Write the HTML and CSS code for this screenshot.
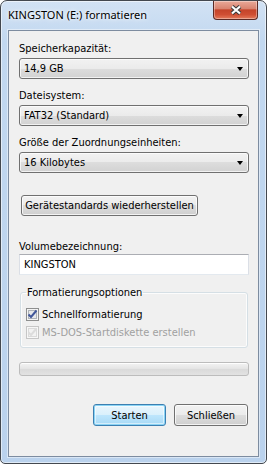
FILE: index.html
```html
<!DOCTYPE html>
<html lang="de">
<head>
    <meta charset="UTF-8">
    <meta name="viewport" content="width=device-width, initial-scale=1.0">
    <title>KINGSTON (E:) formatieren</title>
    <link rel="stylesheet" href="styles.css">
</head>
<body>
    <div class="window">
        <div class="titlebar">
            <span class="title">KINGSTON (E:) formatieren</span>
            <div class="close">
                <svg width="12" height="10" viewBox="0 0 12 10">
                    <path d="M2 1.5 L10 8.5 M10 1.5 L2 8.5" stroke="#3b3b3b" stroke-width="4.2" fill="none"/>
                    <path d="M2 1.5 L10 8.5 M10 1.5 L2 8.5" stroke="#fff" stroke-width="2.2" fill="none"/>
                </svg>
            </div>
        </div>

        <div class="client">
            <div class="caption first">Speicherkapazität:</div>
            <div class="combo"><span>14,9 GB</span><span class="arrow"></span></div>

            <div class="caption">Dateisystem:</div>
            <div class="combo"><span>FAT32 (Standard)</span><span class="arrow"></span></div>

            <div class="caption">Größe der Zuordnungseinheiten:</div>
            <div class="combo"><span>16 Kilobytes</span><span class="arrow"></span></div>

            <div class="btn reset">Gerätestandards wiederherstellen</div>

            <div class="caption volume">Volumebezeichnung:</div>
            <div class="textbox">KINGSTON</div>

            <fieldset class="group">
                <legend>Formatierungsoptionen</legend>
                <div class="check first">
                    <span class="box">
                        <svg width="11" height="11" viewBox="0 0 11 11">
                            <rect x="1.5" y="1.5" width="8" height="8" class="inner"/>
                            <path d="M1.5 5.5 L4 8 L9.5 1.5" fill="none" stroke="#41579a" stroke-width="2"/>
                        </svg>
                    </span>
                    <span>Schnellformatierung</span>
                </div>
                <div class="check disabled">
                    <span class="box">
                        <svg width="11" height="11" viewBox="0 0 11 11">
                            <rect x="1.5" y="1.5" width="8" height="8" class="inner"/>
                            <path d="M1.5 5.5 L4 8 L9.5 1.5" fill="none" stroke="#dcdcdc" stroke-width="2"/>
                        </svg>
                    </span>
                    <span>MS-DOS-Startdiskette erstellen</span>
                </div>
            </fieldset>

            <div class="progress"></div>

            <div class="actions">
                <div class="btn default">Starten</div>
                <div class="btn">Schließen</div>
            </div>
        </div>
    </div>
</body>
</html>
```

FILE: styles.css
```css
/* Fenster */
body {
    margin: 0;
    font-family: "DejaVu Sans Condensed", "Liberation Sans", sans-serif;
    font-size: 11px;
    color: #000;
}

.window {
    width: 267px;
    height: 464px;
    box-sizing: border-box;
    display: flex;
    flex-direction: column;
    padding: 0 7px 6px 7px;
    border: 1px solid #43484f;
    border-radius: 7px 7px 5px 5px;
    background: linear-gradient(180deg, #d2e2f4 0%, #c2d8f0 40px, #bad2ed 100%);
    box-shadow: inset 0 0 0 1px rgba(255, 255, 255, 0.55);
}

.titlebar {
    height: 29px;
    display: flex;
    align-items: flex-start;
}

.title {
    padding-top: 6px;
    font-family: "Noto Sans", sans-serif;
    font-size: 11px;
    line-height: 15px;
    text-shadow: 0 0 6px rgba(255, 255, 255, 0.95), 0 0 3px rgba(255, 255, 255, 0.9);
}

.close {
    margin-left: auto;
    margin-right: 1px;
    width: 45px;
    height: 19px;
    box-sizing: border-box;
    display: flex;
    align-items: center;
    justify-content: center;
    border: 1px solid #5b2a25;
    border-top: none;
    border-radius: 0 0 4px 4px;
    background: linear-gradient(180deg, #e9a999 0%, #d98470 42%, #c5442a 50%, #cf4e33 75%, #e47a5b 100%);
    box-shadow: inset 0 0 0 1px rgba(255, 255, 255, 0.35);
}

.client {
    flex: 1;
    display: flex;
    flex-direction: column;
    padding: 11px 9px 0 10px;
    background: #f0f0f0;
    border: 1px solid #7d8ca0;
    box-shadow: 0 0 0 1px rgba(255, 255, 255, 0.45);
}

/* Beschriftungen */
.caption {
    line-height: 13px;
    margin-top: 10px;
}

.caption.first {
    margin-top: 0;
}

.caption.volume {
    margin-top: 24px;
}

/* Kombinationsfelder */
.combo {
    margin-top: 3px;
    height: 21px;
    box-sizing: border-box;
    display: flex;
    align-items: center;
    padding: 0 5px 0 4px;
    line-height: 19px;
    border: 1px solid #707070;
    border-radius: 3px;
    background: linear-gradient(180deg, #f2f2f2 0%, #ebebeb 50%, #dddddd 50%, #d2d2d2 100%);
    box-shadow: inset 0 0 0 1px rgba(255, 255, 255, 0.7);
}

.arrow {
    margin-left: auto;
    width: 0;
    height: 0;
    border-left: 3.5px solid transparent;
    border-right: 3.5px solid transparent;
    border-top: 4px solid #000;
}

/* Schaltflächen */
.btn {
    height: 22px;
    box-sizing: border-box;
    display: flex;
    align-items: center;
    justify-content: center;
    border: 1px solid #707070;
    border-radius: 3px;
    background: linear-gradient(180deg, #f2f2f2 0%, #ebebeb 50%, #dddddd 50%, #cfcfcf 100%);
    box-shadow: inset 0 0 0 1px rgba(255, 255, 255, 0.75);
}

.btn.reset {
    margin: 22px 0 0 2px;
    width: 177px;
    height: 21px;
}

.btn.default {
    border-color: #3c7fb1;
    background: linear-gradient(180deg, #eaf6fd 0%, #d9f0fc 50%, #bee6fd 50%, #a7d9f5 100%);
    box-shadow: inset 0 0 0 1px #8ad4f5, inset 0 0 0 2px rgba(255, 255, 255, 0.5);
}

/* Textfeld */
.textbox {
    margin-top: 1px;
    height: 21px;
    box-sizing: border-box;
    padding-left: 4px;
    line-height: 19px;
    background: #fff;
    border: 1px solid #dbdfe6;
    border-top-color: #abadb3;
    border-bottom-color: #e3e9ef;
}

/* Gruppe */
.group {
    margin: 11px 1px 0 1px;
    padding: 0 5px 8px 5px;
    border: 1px solid #d5dfe5;
    border-radius: 3px;
    box-shadow: inset 0 0 0 1px rgba(255, 255, 255, 0.8);
}

.group legend {
    padding: 0 1px;
    line-height: 13px;
}

.check {
    display: flex;
    align-items: center;
    gap: 3px;
    height: 13px;
    line-height: 13px;
    margin-top: 5px;
}

.check.first {
    margin-top: 9px;
}

.box {
    width: 13px;
    height: 13px;
    box-sizing: border-box;
    border: 1px solid #8e8f8f;
    background: #f4f4f4;
    display: flex;
}

.box .inner {
    fill: #e6e8ea;
    stroke: #aeb3b9;
}

.check.disabled {
    color: #a0a0a0;
}

.check.disabled .box {
    border-color: #c6c6c6;
    background: #f7f7f7;
}

.check.disabled .inner {
    fill: #f2f2f2;
    stroke: #dadada;
}

/* Fortschritt */
.progress {
    margin-top: 14px;
    height: 14px;
    box-sizing: border-box;
    border: 1px solid #bcbcbc;
    border-radius: 3px;
    background: linear-gradient(180deg, #f3f3f3 0%, #e6e6e6 45%, #dadada 55%, #e2e2e2 100%);
    box-shadow: inset 0 1px 0 rgba(255, 255, 255, 0.9);
}

.actions {
    margin: 28px 1px 0 0;
    display: flex;
    justify-content: flex-end;
    gap: 8px;
}

.actions .btn {
    width: 74px;
}

.actions .btn.default {
    width: 73px;
}
```
